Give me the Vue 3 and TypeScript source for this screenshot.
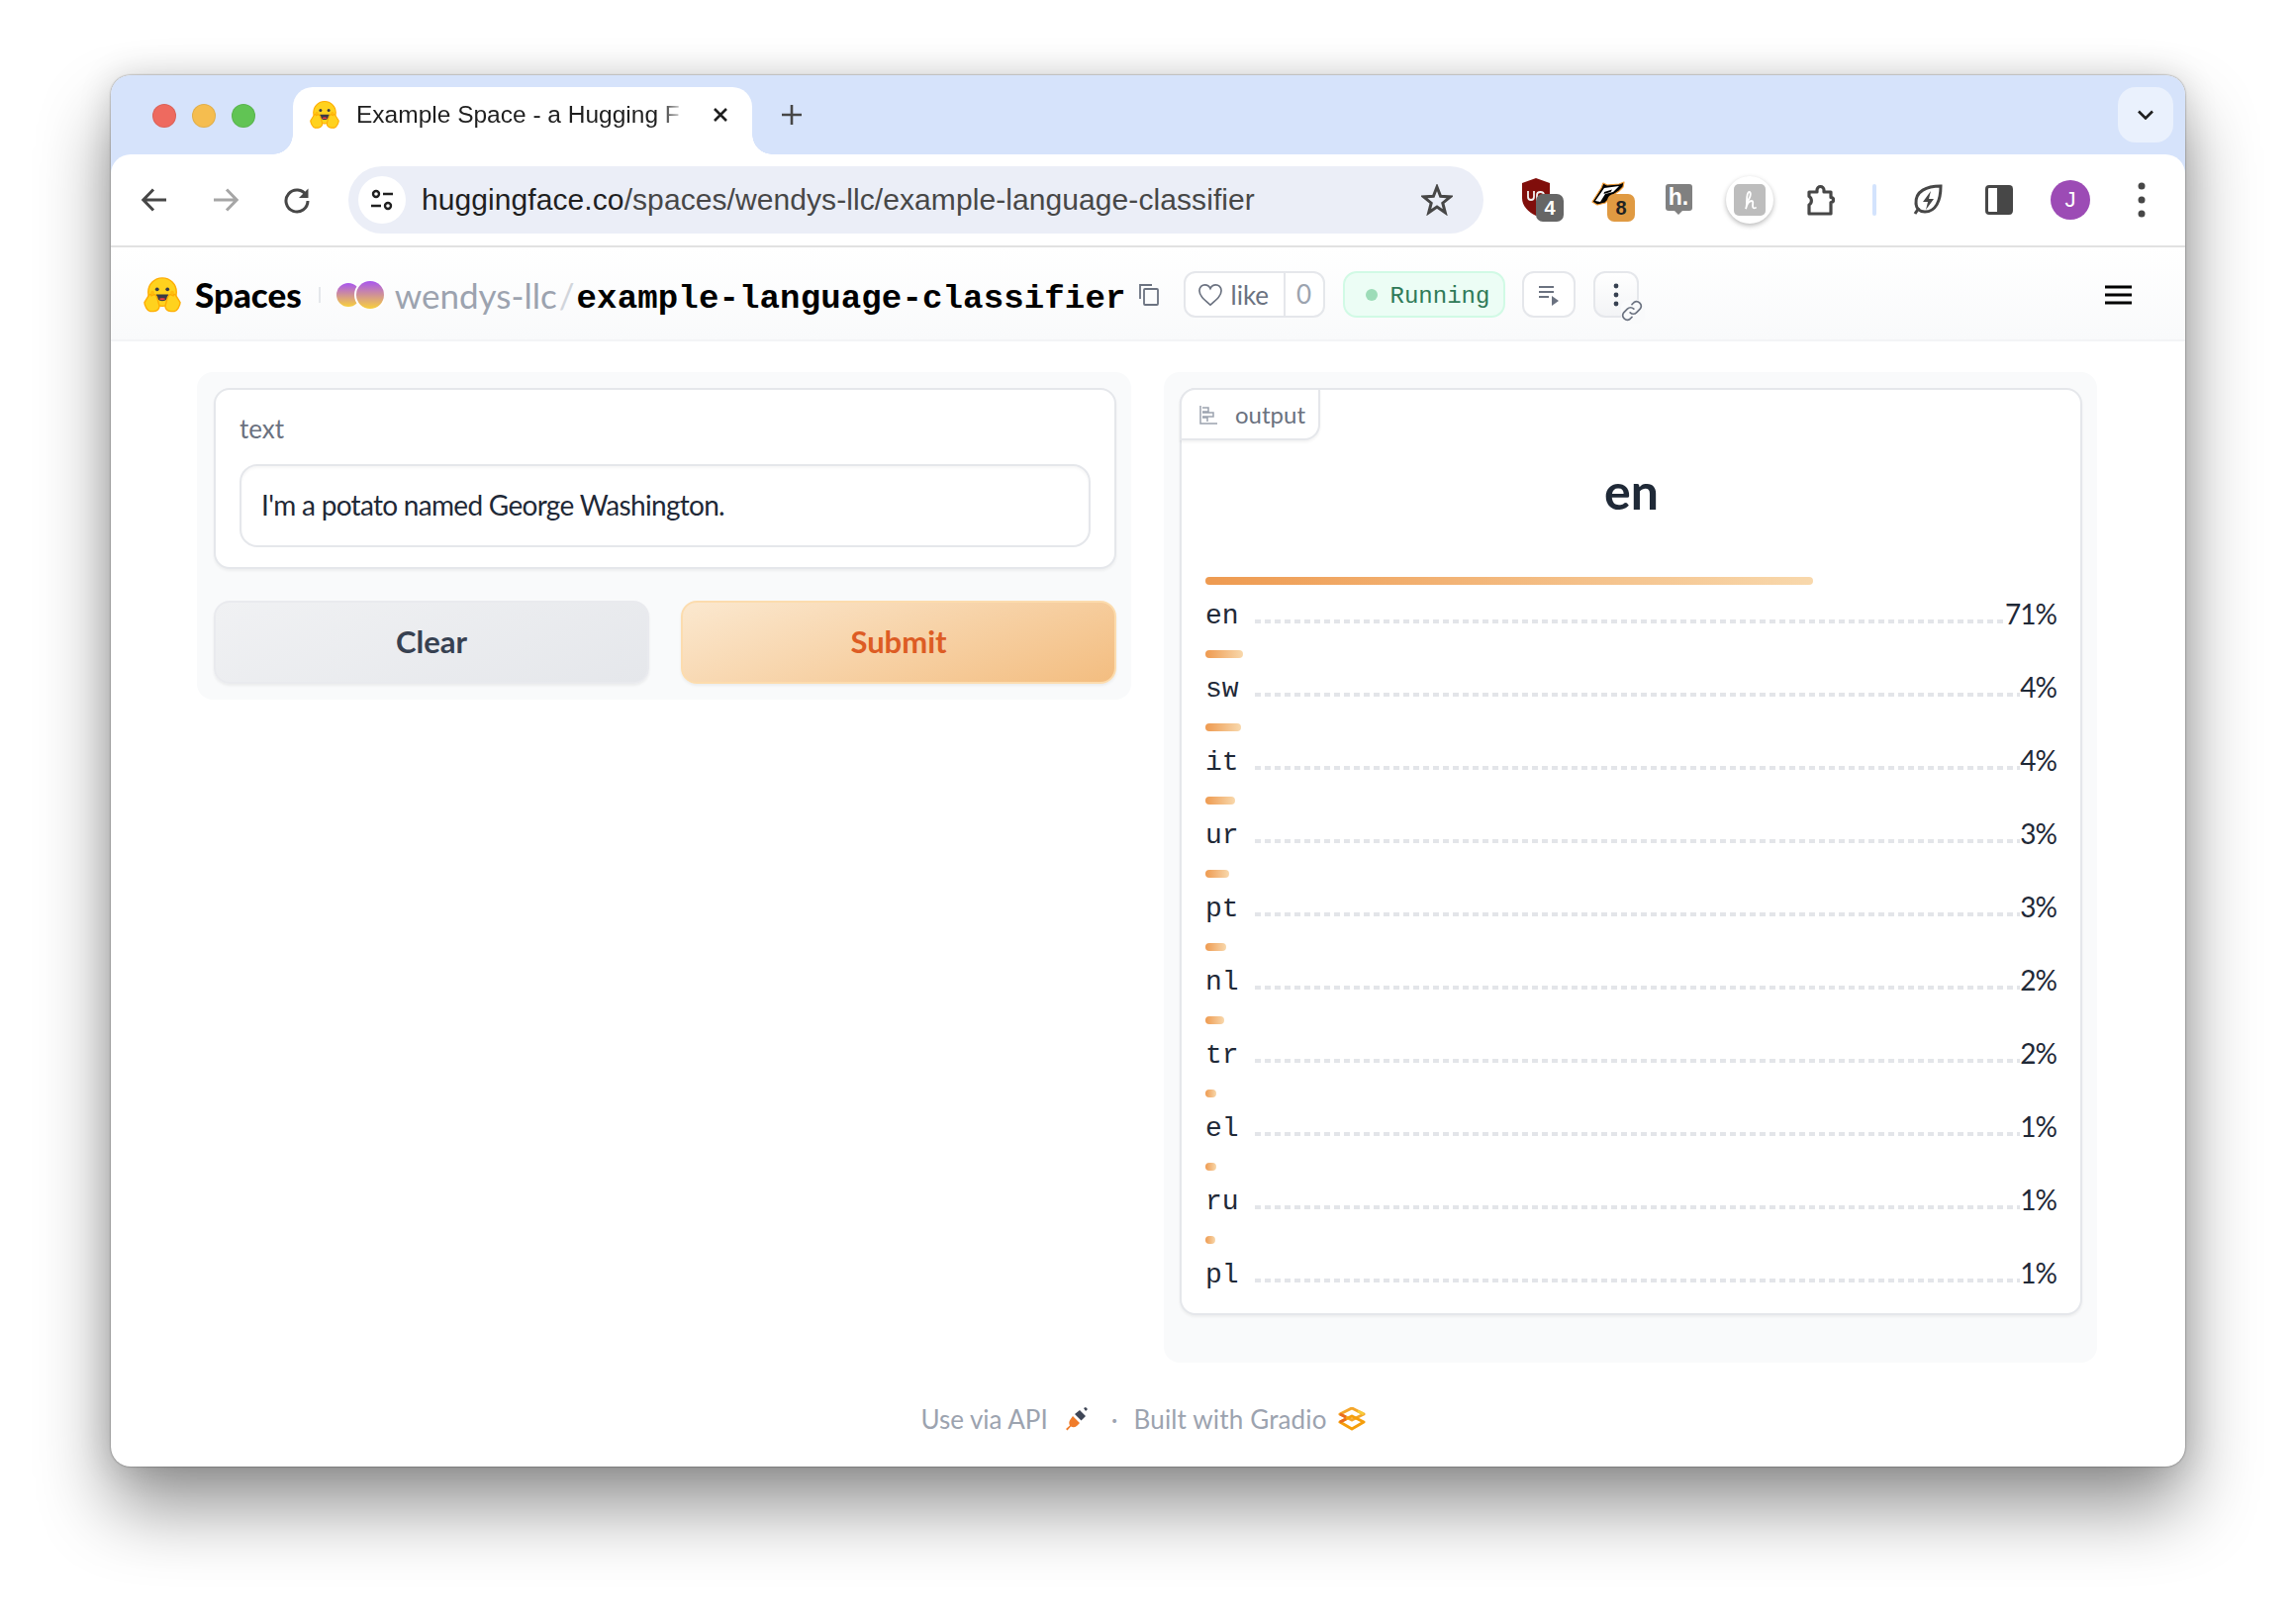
<template>
  <div class="desk">
    <div class="window">
      <div class="chrome">
        <div class="tabstrip">
          <div class="lights">
            <span class="light red"></span>
            <span class="light yellow"></span>
            <span class="light green"></span>
          </div>
          <div class="tab">
            <svg class="tab-logo" viewBox="0 0 40 40">
              <defs>
                <symbol id="hf" viewBox="0 0 40 40">
                  <circle cx="20" cy="17" r="15" fill="#ffd21e" stroke="#ffad03" stroke-width="1.5" />
                  <circle cx="14.5" cy="14" r="2" fill="#3a3b45" />
                  <circle cx="25.5" cy="14" r="2" fill="#3a3b45" />
                  <circle cx="9.5" cy="17.5" r="2" fill="#ffad03" opacity=".6" />
                  <circle cx="30.5" cy="17.5" r="2" fill="#ffad03" opacity=".6" />
                  <path d="M13.5 19.5h13c0 4.5-2.8 7-6.5 7s-6.5-2.500-6.500-7z" fill="#3a3b45" />
                  <path d="M16.500 24.300c1-1.300 6-1.300 7 0-1 1.500-6 1.500-7 0z" fill="#f94040" />
                  <path d="M1 28l5-8c1-1.200 2.500-.5 2.300 1l3-1.500c1.500 0 2 1 3 3l2.500 9c.5 3-2 6-6 6H7c-2.500 0-6-6-6-9.500z" fill="#ffd21e" stroke="#ffad03" stroke-width="1.500" stroke-linejoin="round" />
                  <path d="M39 28l-5-8c-1-1.200-2.500-.5-2.300 1l-3-1.500c-1.500 0-2 1-3 3l-2.500 9c-.5 3 2 6 6 6H33c2.500 0 6-6 6-9.500z" fill="#ffd21e" stroke="#ffad03" stroke-width="1.500" stroke-linejoin="round" />
                </symbol>
              </defs>
              <use href="#hf" />
            </svg>
            <span class="tab-title">Example Space - a Hugging F</span>
            <svg class="tab-close" viewBox="0 0 16 16">
              <path d="M2 2l12 12M14 2L2 14" />
            </svg>
          </div>
          <svg class="new-tab" viewBox="0 0 22 22">
            <path d="M11 1v20M1 11h20" />
          </svg>
          <div class="tab-search">
            <svg viewBox="0 0 18 10"><path d="M2 1.500l7 7 7-7" /></svg>
          </div>
        </div>

        <div class="toolbar">
          <div class="slot">
            <svg class="ico" viewBox="0 0 28 28"><path d="M26 14H3M13 3.500L2.800 14 13 24.500" /></svg>
          </div>
          <div class="slot">
            <svg class="ico light-ico" viewBox="0 0 28 28"><path d="M2 14h23M15 3.500L25.200 14 15 24.500" /></svg>
          </div>
          <div class="slot">
            <svg class="ico" viewBox="0 0 28 28">
              <path d="M23.500 9.500A11 11 0 1 0 25 15" />
              <path class="solid" d="M25.500 2.500v9.500H16z" />
            </svg>
          </div>

          <div class="omnibox">
            <span class="site-info">
              <svg viewBox="0 0 24 24">
                <circle cx="6" cy="6" r="3" />
                <path d="M13 6h10M1 18h10" />
                <circle cx="18" cy="18" r="3" />
              </svg>
            </span>
            <span class="url"><b>huggingface.co</b>/spaces/wendys-llc/example-language-classifier</span>
            <svg class="ico star" viewBox="0 0 32 32">
              <path d="M16 3l3.600 9.300 9.900.6-7.700 6.300 2.500 9.600L16 23l-8.300 5.800 2.500-9.600-7.700-6.300 9.900-.6z" />
            </svg>
          </div>

          <div class="slot">
            <svg class="ext-shield" viewBox="0 0 28 38">
              <path d="M14 0l14 5v15c0 8-6 14-14 18C6 34 0 28 0 20V5z" fill="#800e0b" />
              <path d="M6 13v6c0 4 6 4 6 0v-6M15 25V17c0-4 7-4 7 0v3c0 3-5 3-6 1" fill="none" stroke="#f2f2f2" stroke-width="1.800" />
            </svg>
            <span class="badge gray">4</span>
          </div>
          <div class="slot">
            <svg class="ext-badger" viewBox="0 0 34 26">
              <path d="M1 21L10 7l2-5 4 2 12-1 5-2-1 5-4 4-6 4-8 8-8 2z" fill="#000" stroke="#ef9a34" stroke-width="1.200" stroke-linejoin="round" />
              <path d="M4 20l9-13 15-2-6 6-8 2-5 8z" fill="#fff" />
              <path d="M13 11l8-2.500-1.500 2.500-7 2z" fill="#000" />
            </svg>
            <span class="badge orange">8</span>
          </div>
          <div class="slot">
            <div class="ext-h">h.</div>
          </div>
          <div class="slot">
            <span class="honey">
              <span class="honey-sq">
                <svg viewBox="0 0 24 24"><path d="M9 14c3-3 5-8 3-10-2-1-3 4-3 9 0 3 0 6-1 8 1-4 3-8 6-8 2 0 1 3 1 5s1 3 3 2" /></svg>
              </span>
            </span>
          </div>
          <div class="slot">
            <svg class="ico puzzle" viewBox="0 0 31 32">
              <path d="M3 8h8V6a3.500 3.500 0 0 1 7 0v2h7v5.500a2.500 2.500 0 0 1 0 5V30H3v-9a5 5 0 0 0 0-8.500z" />
              <path class="solid" d="M26 13a3 3 0 0 1 0 6z" />
            </svg>
          </div>
          <div class="sep"></div>
          <div class="slot">
            <svg class="ico leaf" viewBox="0 0 32 34">
              <path d="M29 3C15 3 3 8 4 21c.5 5 4 8 9 8 11 0 16-11 16-26z" />
              <path d="M7 25L3 31" />
              <path class="solid" d="M19 8l-8 11h5l-2 8 8-11h-5z" />
            </svg>
          </div>
          <div class="slot">
            <svg class="ico side" viewBox="0 0 28 30">
              <rect x="1.500" y="1.500" width="25" height="27" rx="2.500" />
              <rect class="solid" x="12" y="1.500" width="14.500" height="27" />
            </svg>
          </div>
          <div class="slot"><span class="avatar">J</span></div>
          <div class="slot">
            <svg class="kebab" viewBox="0 0 8 36">
              <circle cx="4" cy="4" r="3.500" />
              <circle cx="4" cy="18" r="3.500" />
              <circle cx="4" cy="32" r="3.500" />
            </svg>
          </div>
        </div>
      </div>

      <header class="hf-header">
        <svg class="hf-logo" viewBox="0 0 40 40"><use href="#hf" /></svg>
        <span class="brand">Spaces</span>
        <span class="brand-sep"></span>
        <svg class="org-avatar" viewBox="0 0 48 28">
          <defs>
            <linearGradient id="org" x1="0" y1="0" x2="0" y2="1">
              <stop offset="0" stop-color="#a855f0" />
              <stop offset="1" stop-color="#f8d03c" />
            </linearGradient>
          </defs>
          <circle cx="12" cy="14" r="12" fill="url(#org)" />
          <circle cx="34" cy="14" r="16" fill="#fff" />
          <circle cx="34" cy="14" r="14" fill="url(#org)" />
        </svg>
        <span class="org">wendys-llc</span>
        <span class="slash">/</span>
        <span class="space-name">example-language-classifier</span>
        <svg class="copy" viewBox="0 0 20 22">
          <path d="M1 15V1h12" />
          <rect x="5" y="5" width="14" height="16" rx="1" />
        </svg>
        <div class="like">
          <span class="like-main">
            <svg class="heart" viewBox="0 0 28 26">
              <path d="M14 24C7 18 2 14 2 8.500 2 4.500 5 2 8 2c2.500 0 4.700 1.300 6 4 1.300-2.700 3.500-4 6-4 3 0 6 2.500 6 6.500C26 14 21 18 14 24z" />
            </svg>
            like
          </span>
          <span class="like-count">0</span>
        </div>
        <div class="running"><i></i><span>Running</span></div>
        <div class="square-btn">
          <svg viewBox="0 0 24 24">
            <path d="M2 4h15M2 9h15M2 14h10" />
            <path class="solid" d="M15 13l7 5-7 5z" />
          </svg>
        </div>
        <div class="dots-btn">
          <svg class="dots" viewBox="0 0 6 24">
            <circle cx="3" cy="3" r="2.400" />
            <circle cx="3" cy="12" r="2.400" />
            <circle cx="3" cy="21" r="2.400" />
          </svg>
          <span class="link-chip">
            <svg viewBox="0 0 24 24">
              <path d="M10 14a5 5 0 0 0 7 0l4-4a5 5 0 0 0-7-7l-2 2" />
              <path d="M14 10a5 5 0 0 0-7 0l-4 4a5 5 0 0 0 7 7l2-2" />
            </svg>
          </span>
        </div>
        <svg class="burger" viewBox="0 0 27 20"><path d="M0 2h27M0 10h27M0 18h27" /></svg>
      </header>

      <main class="app">
        <section class="panel">
          <div class="card input-card">
            <div class="field-label">text</div>
            <div class="field">I'm a potato named George Washington.</div>
          </div>
          <div class="buttons">
            <button class="btn clear">Clear</button>
            <button class="btn submit">Submit</button>
          </div>
        </section>

        <section class="panel">
          <div class="card output-card">
            <div class="output-tab">
              <svg viewBox="0 0 20 20">
                <path d="M2 1v18h17M4 3h6v4H4M4 8h11v4H4M4 13h5v4" />
              </svg>
              output
            </div>
            <h2 class="top-label">en</h2>
            <div class="conf-list">
              <div v-for="row in rows" :key="row.label" class="conf">
                <div class="conf-bar" :style="{ width: row.bar + 'px' }"></div>
                <div class="conf-row">
                  <span class="conf-label">{{ row.label }}</span>
                  <span class="conf-dots"></span>
                  <span class="conf-value">{{ row.value }}%</span>
                </div>
              </div>
            </div>
          </div>
        </section>
      </main>

      <footer class="foot">
        <span>Use via API</span>
        <svg class="plug" viewBox="0 0 24 24">
          <path d="M15 3l6 6-3.500 3.500-1 1L10 7z M19 1l2-1 2 2-2 2z" fill="#3f4656" />
          <path d="M8 9l7 7-3 3c-2 1.500-4 1.500-6 .5l-3.500 4-1.500-1.500 4-3.500c-1-2-1-4 .5-6z" fill="#f07c2a" />
        </svg>
        <span class="foot-dot">·</span>
        <span class="built">Built with Gradio</span>
        <svg class="gradio" viewBox="0 0 28 24">
          <path d="M14 1l12 6-12 6L2 7z" fill="none" stroke="#f4a62a" stroke-width="3" stroke-linejoin="round" />
          <path d="M2 15l12-6 12 6-12 7z" fill="none" stroke="#f59e0b" stroke-width="3" stroke-linejoin="round" />
          <path d="M2 7l6 3M2 15l6-3" stroke="#ea6a20" stroke-width="3" />
          <path d="M20 4l6 3" stroke="#f6cc3c" stroke-width="3" />
        </svg>
      </footer>
    </div>
  </div>
</template>

<script setup lang="ts">
interface Row {
  label: string
  value: number
  bar: number
}

const rows: Row[] = [
  { label: 'en', value: 71, bar: 614 },
  { label: 'sw', value: 4, bar: 38 },
  { label: 'it', value: 4, bar: 36 },
  { label: 'ur', value: 3, bar: 30 },
  { label: 'pt', value: 3, bar: 24 },
  { label: 'nl', value: 2, bar: 21 },
  { label: 'tr', value: 2, bar: 19 },
  { label: 'el', value: 1, bar: 11 },
  { label: 'ru', value: 1, bar: 11 },
  { label: 'pl', value: 1, bar: 10 }
]
</script>

<style>
html,
body {
  margin: 0;
  background: #fff;
}
</style>

<style scoped>
.desk {
  width: 2320px;
  height: 1630px;
  box-sizing: border-box;
  padding: 76px 112px 148px;
  font-family: Lato, "Noto Sans", sans-serif;
  overflow: hidden;
  background: #fff;
}

.window {
  height: 100%;
  border-radius: 20px;
  background: #fff;
  overflow: hidden;
  box-shadow: 0 42px 72px rgba(0, 0, 0, 0.42), 0 0 34px rgba(0, 0, 0, 0.14), 0 0 2px rgba(0, 0, 0, 0.55);
}

/* browser chrome */
.chrome {
  background: #d6e3fb;
}

.tabstrip {
  height: 80px;
  display: flex;
  align-items: flex-end;
}

.lights {
  display: flex;
  gap: 16px;
  align-self: flex-start;
  padding: 29px 0 0 42px;
  width: 184px;
  box-sizing: border-box;
}

.light {
  width: 24px;
  height: 24px;
  border-radius: 50%;
  box-sizing: border-box;
  border: 1px solid rgba(0, 0, 0, 0.08);
}

.red { background: #ee6a5f; }
.yellow { background: #f5bd4f; }
.green { background: #61c454; }

.tab {
  position: relative;
  width: 464px;
  height: 68px;
  display: flex;
  align-items: center;
  padding: 0 24px 12px 17px;
  box-sizing: border-box;
  background: #fff;
  border-radius: 20px 20px 0 0;
}

.tab::before,
.tab::after {
  content: "";
  position: absolute;
  bottom: 0;
  width: 20px;
  height: 20px;
}

.tab::before {
  left: -20px;
  background: radial-gradient(circle at 0 0, transparent 19.5px, #fff 20px);
}

.tab::after {
  right: -20px;
  background: radial-gradient(circle at 100% 0, transparent 19.500px, #fff 20px);
}

.tab-logo {
  width: 30px;
  height: 30px;
  flex: none;
}

.tab-title {
  margin-left: 17px;
  width: 336px;
  flex: none;
  white-space: nowrap;
  font: 24.5px "Liberation Sans", sans-serif;
  line-height: 32px;
  color: #1f1f1f;
  -webkit-mask-image: linear-gradient(90deg, #000 308px, transparent 332px);
  mask-image: linear-gradient(90deg, #000 308px, transparent 332px);
}

.tab-close {
  width: 16px;
  height: 16px;
  margin-left: 24px;
  fill: none;
  stroke: #1f1f1f;
  stroke-width: 2.6;
}

.new-tab {
  width: 22px;
  height: 22px;
  margin: 0 0 29px 29px;
  fill: none;
  stroke: #474747;
  stroke-width: 2.6;
}

.tab-search {
  margin: 0 12px 12px auto;
  width: 56px;
  height: 56px;
  border-radius: 18px;
  background: #eaf1fd;
  display: flex;
  align-items: center;
  justify-content: center;
}

.tab-search svg {
  width: 18px;
  height: 10px;
  fill: none;
  stroke: #1f1f1f;
  stroke-width: 2.6;
}

.toolbar {
  height: 92px;
  padding: 0 8px;
  display: flex;
  align-items: center;
  background: #fff;
  border-radius: 20px 20px 0 0;
  border-bottom: 2px solid #e2e2e2;
}

.slot {
  position: relative;
  flex: none;
  width: 72px;
  height: 72px;
  display: flex;
  align-items: center;
  justify-content: center;
}

.ico {
  width: 28px;
  height: 28px;
  fill: none;
  stroke: #474747;
  stroke-width: 3;
}

.ico .solid {
  fill: #474747;
  stroke: none;
}

.light-ico {
  stroke: #a6a6a6;
}

.omnibox {
  width: 1147px;
  height: 68px;
  margin: 0 17px 0 16px;
  padding: 0 18px 0 10px;
  box-sizing: border-box;
  display: flex;
  align-items: center;
  flex: none;
  border-radius: 34px;
  background: #ebeef7;
}

.site-info {
  width: 48px;
  height: 48px;
  flex: none;
  border-radius: 50%;
  background: #fff;
  display: flex;
  align-items: center;
  justify-content: center;
}

.site-info svg {
  width: 24px;
  height: 24px;
  fill: none;
  stroke: #1f1f1f;
  stroke-width: 2.4;
}

.url {
  margin-left: 16px;
  font: 30px "Liberation Sans", sans-serif;
  letter-spacing: 0.08px;
  color: #474747;
  white-space: nowrap;
}

.url b {
  font-weight: 400;
  color: #1f1f1f;
}

.star {
  width: 32px;
  height: 32px;
  margin-left: auto;
  margin-right: 13px;
}

.ext-shield {
  width: 28px;
  height: 38px;
  position: absolute;
  left: 22px;
  top: 14px;
}

.badge {
  position: absolute;
  left: 36px;
  top: 30px;
  width: 28px;
  height: 28px;
  border-radius: 7px;
  font: 700 20px "Liberation Sans", sans-serif;
  line-height: 28px;
  text-align: center;
}

.badge.gray {
  background: #666;
  color: #fff;
}

.badge.orange {
  background: #e09a42;
  color: #222;
}

.ext-badger {
  position: absolute;
  left: 20px;
  top: 17px;
  width: 34px;
  height: 26px;
}

.ext-h {
  position: relative;
  width: 27px;
  height: 27px;
  border-radius: 3px;
  margin-top: -6px;
  background: #808080;
  color: #fff;
  font: 700 23px "Liberation Sans", sans-serif;
  line-height: 26px;
  text-align: center;
}

.ext-h::after {
  content: "";
  position: absolute;
  left: 9px;
  bottom: -4px;
  border: 4px solid transparent;
  border-bottom: 0;
  border-top-color: #808080;
}

.honey {
  width: 48px;
  height: 48px;
  border-radius: 50%;
  background: #fff;
  box-shadow: 0 2px 5px rgba(0, 0, 0, 0.28);
  display: flex;
  align-items: center;
  justify-content: center;
}

.honey-sq {
  width: 32px;
  height: 32px;
  border-radius: 5px;
  background: #bdbdbd;
  display: flex;
  align-items: center;
  justify-content: center;
}

.honey-sq svg {
  width: 24px;
  height: 24px;
  fill: none;
  stroke: #fff;
  stroke-width: 1.8;
  stroke-linecap: round;
}

.puzzle {
  width: 31px;
  height: 32px;
  stroke-width: 3.2;
  stroke-linejoin: round;
}

.sep {
  width: 4px;
  height: 32px;
  margin: 0 16px;
  flex: none;
  border-radius: 2px;
  background: #d3e3fd;
}

.leaf {
  width: 32px;
  height: 34px;
}

.side {
  width: 28px;
  height: 30px;
}

.avatar {
  width: 40px;
  height: 40px;
  border-radius: 50%;
  background: #9c4bb5;
  color: #fff;
  font: 22px "Liberation Sans", sans-serif;
  line-height: 40px;
  text-align: center;
}

.kebab {
  width: 8px;
  height: 36px;
  fill: #474747;
}

/* huggingface header */
.hf-header {
  height: 95px;
  box-sizing: border-box;
  display: flex;
  align-items: center;
  padding: 2px 0 0 33px;
  border-bottom: 2px solid #f3f4f6;
  background: linear-gradient(#fff, #f9fafb);
}

.hf-logo {
  width: 38px;
  height: 38px;
  flex: none;
}

.brand {
  margin: -2px 0 0 14px;
  font-weight: 900;
  font-size: 35px;
  color: #000;
}

.brand-sep {
  width: 2px;
  height: 16px;
  margin: 0 16px 0 17px;
  background: #e5e7eb;
}

.org-avatar {
  width: 48px;
  height: 28px;
  flex: none;
}

.org {
  margin-left: 11px;
  font-size: 35px;
  color: #9ca3af;
}

.slash {
  margin: 0 2px 0 2px;
  font-size: 35px;
  color: #d1d5db;
}

.space-name {
  margin-top: 8px;
  font: 700 34px "Liberation Mono", monospace;
  letter-spacing: 0.15px;
  color: #000;
}

.copy {
  width: 20px;
  height: 22px;
  margin-left: 13px;
  fill: none;
  stroke: #6b7280;
  stroke-width: 1.8;
}

.like {
  margin-left: 25px;
  height: 47px;
  display: flex;
  align-items: stretch;
  box-sizing: border-box;
  border: 2px solid #e5e7eb;
  border-radius: 12px;
  background: #fff;
  font-size: 26px;
  color: #6b7280;
}

.like-main {
  width: 101px;
  box-sizing: border-box;
  display: flex;
  align-items: center;
  gap: 8px;
  padding-left: 12px;
  border-right: 2px solid #e5e7eb;
}

.heart {
  width: 26px;
  height: 24px;
  fill: none;
  stroke: #6b7280;
  stroke-width: 1.8;
}

.like-count {
  width: 38px;
  text-align: center;
  line-height: 43px;
  color: #9ca3af;
}

.running {
  margin-left: 18px;
  width: 164px;
  height: 47px;
  box-sizing: border-box;
  display: flex;
  align-items: center;
  padding-left: 21px;
  border: 2px solid #d1fae5;
  border-radius: 14px;
  background: #ecfdf5;
  font: 24px "Liberation Mono", monospace;
  color: #2f7a58;
}

.running span {
  margin-top: 4px;
}

.running i {
  width: 12px;
  height: 12px;
  margin-right: 13px;
  border-radius: 50%;
  background: #9ddcb8;
}

.square-btn {
  margin-left: 17px;
  width: 54px;
  height: 47px;
  box-sizing: border-box;
  border: 2px solid #e5e7eb;
  border-radius: 12px;
  background: #fff;
  display: flex;
  align-items: center;
  justify-content: center;
}

.square-btn svg {
  width: 24px;
  height: 24px;
  fill: none;
  stroke: #6b7280;
  stroke-width: 2;
}

.square-btn .solid {
  fill: #6b7280;
  stroke: none;
}

.dots-btn {
  position: relative;
  margin-left: 18px;
  width: 46px;
  height: 47px;
  box-sizing: border-box;
  border: 2px solid #e5e7eb;
  border-radius: 12px;
  background: linear-gradient(#fff, #f3f4f6);
  display: flex;
  align-items: center;
  justify-content: center;
}

.dots {
  width: 6px;
  height: 24px;
  fill: #374151;
}

.link-chip {
  position: absolute;
  left: 26px;
  top: 27px;
  width: 24px;
  height: 24px;
  border-radius: 8px;
  background: #f9fafb;
}

.link-chip svg {
  width: 22px;
  height: 22px;
  fill: none;
  stroke: #6b7280;
  stroke-width: 1.8;
  stroke-linecap: round;
}

.burger {
  margin-left: auto;
  margin-right: 54px;
  width: 27px;
  height: 20px;
  fill: none;
  stroke: #000;
  stroke-width: 3;
}

/* gradio app */
.app {
  display: grid;
  grid-template-columns: 944px 943px;
  gap: 33px;
  align-items: start;
  padding: 31px 89px 0 87px;
}

.panel {
  padding: 16px 15px 16px 17px;
  border-radius: 16px;
  background: #f9fafb;
}

.panel + .panel {
  padding: 16px 15px 48px 16px;
}

.card {
  position: relative;
  box-sizing: border-box;
  border: 2px solid #e5e7eb;
  border-radius: 16px;
  background: #fff;
  box-shadow: 0 2px 3px rgba(0, 0, 0, 0.05);
}

.input-card {
  height: 183px;
  padding: 24px 24px 0 24px;
}

.field-label {
  font-size: 26px;
  line-height: 30px;
  color: #6b7280;
}

.field {
  height: 84px;
  margin-top: 21px;
  padding: 0 20px;
  box-sizing: border-box;
  border: 2px solid #e5e7eb;
  border-radius: 18px;
  box-shadow: inset 0 2px 3px rgba(0, 0, 0, 0.04);
  font-size: 28px;
  letter-spacing: -0.7px;
  line-height: 78px;
  color: #1f2937;
}

.buttons {
  display: grid;
  grid-template-columns: 1fr 1fr;
  gap: 32px;
  margin-top: 32px;
}

.btn {
  height: 84px;
  box-sizing: border-box;
  border-radius: 16px;
  padding: 0 0 3px;
  font: 700 31px Lato, "Noto Sans", sans-serif;
  box-shadow: 0 2px 3px rgba(0, 0, 0, 0.06);
}

.clear {
  border: 2px solid #e9eaee;
  background: linear-gradient(160deg, #f0f1f3, #e5e7eb);
  color: #374151;
}

.submit {
  border: 2px solid #fcdcae;
  background: linear-gradient(160deg, #fbe8cf, #f3bd80);
  color: #dd5c24;
}

.output-card {
  height: 937px;
  padding: 72px 23px 0 24px;
}

.output-tab {
  position: absolute;
  left: -2px;
  top: -2px;
  width: 142px;
  height: 53px;
  box-sizing: border-box;
  display: flex;
  align-items: center;
  gap: 17px;
  padding-left: 17px;
  border: 2px solid #e5e7eb;
  border-radius: 16px 0 16px 0;
  box-shadow: 0 2px 3px rgba(0, 0, 0, 0.05);
  background: #fff;
  font-size: 24px;
  color: #6b7280;
}

.output-tab svg {
  width: 20px;
  height: 20px;
  flex: none;
  fill: none;
  stroke: #9ca3af;
  stroke-width: 1.5;
}

.top-label {
  margin: 0 0 57px;
  font-size: 50px;
  line-height: 60px;
  font-weight: 700;
  text-align: center;
  color: #1f2937;
}

.conf {
  height: 74px;
}

.conf-bar {
  height: 8px;
  border-radius: 4px;
  background: linear-gradient(90deg, #ee9a50, #f8d8ac);
}

.conf-row {
  display: flex;
  align-items: center;
  height: 34px;
  margin-top: 13px;
  color: #1f2937;
}

.conf-label {
  margin-top: 2px;
  font: 28px "Liberation Mono", monospace;
  width: 50px;
  flex: none;
}

.conf-dots {
  flex: 1;
  height: 4px;
  margin-top: 14px;
  background: repeating-linear-gradient(90deg, #e3e5e9 0 6px, transparent 6px 10px);
}

.conf-value {
  font-size: 28px;
  letter-spacing: -1px;
  margin: -3px 1px 0 0;
}

.foot {
  display: flex;
  align-items: center;
  justify-content: center;
  padding-right: 10px;
  margin-top: 40px;
  height: 34px;
  font-size: 26px;
  color: #9ca3af;
}

.plug {
  width: 24px;
  height: 24px;
  margin-left: 17px;
}

.foot-dot {
  margin: 0 16px 0 23px;
}

.built {
  letter-spacing: 0.15px;
}

.gradio {
  width: 28px;
  height: 24px;
  margin-left: 11px;
}
</style>
